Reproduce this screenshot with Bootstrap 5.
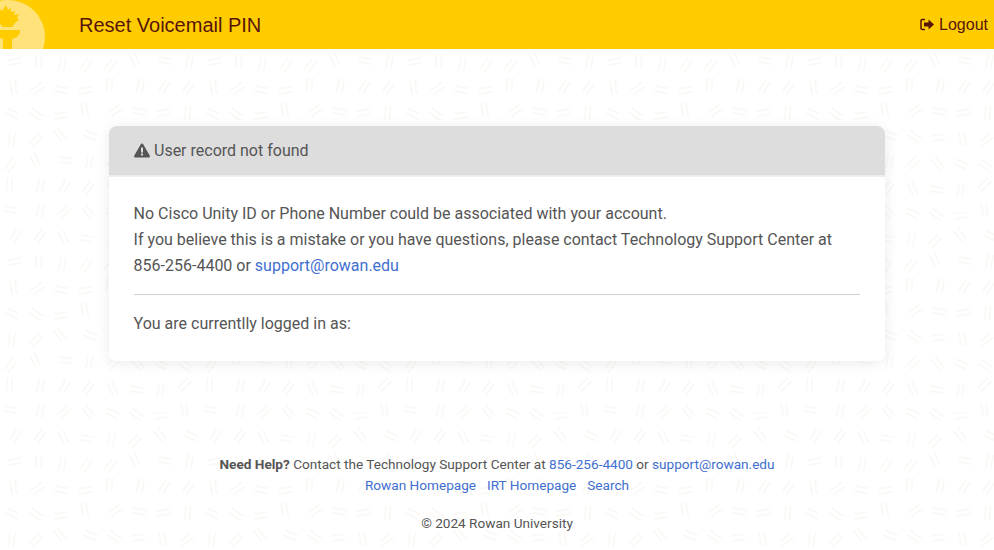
<!DOCTYPE html>
<html lang="en">
<head>
  <meta charset="UTF-8" />
  <title>Reset Voicemail PIN</title>
  <link href="https://cdn.jsdelivr.net/npm/bootstrap@5.3.0/dist/css/bootstrap.min.css" rel="stylesheet">
  <style>
    body {
      font-family: Roboto, "Liberation Sans", sans-serif;
      font-size: 16px;
      color: #555;
      background-color: #fff;
    }
    a { color: #3f6fd0; text-decoration: none; }
    .top-bar { height: 49px; background: #ffcc00; color: #57150b; }
    .top-title { font-family: "Liberation Sans", sans-serif; font-size: 20px; line-height: 1; margin-left: 79px; }
    .top-logo { position: absolute; left: 0; top: 0; }
    .logout-link { font-family: "Liberation Sans", sans-serif; font-size: 16px; color: #57150b; margin-right: 6px; }
    .notice-card { width: 776px; margin: 77px auto 0; border: 0; border-radius: 8px; box-shadow: 0 2px 14px rgba(0,0,0,.08); overflow: hidden; }
    .notice-head { height: 51px; background: #dddddd; border-bottom: 2px solid #eeeeee; padding: 0 25px; color: #555; gap: 4px; }
    .notice-body { padding: 24px 25px 0 24.6px; height: 184px; line-height: 26px; }
    .notice-body hr { margin: 15px 0 16px; border-color: #d0d0d0; opacity: 1; }
    .page-foot { margin-top: 93px; font-size: 13.6px; line-height: 21px; color: #555; text-align: center; }
    .foot-links { gap: 11px; }
    .foot-copy { margin-top: 17px; }
  </style>
</head>
<body>
  <div class="top-bar position-relative d-flex align-items-center justify-content-between">
    <svg class="top-logo" width="46" height="49" viewBox="0 0 46 49">
      <circle cx="8" cy="37" r="37" fill="#ffe27a"/>
      <path d="M6 5l2 5 3-2 0 4 4-1-1 4 5-1-2 4 2 2-4 3-3 4H3L0 24V9l2 2z" fill="#ffcc00"/>
      <path d="M0 30h20v3l-3 4-5 2v10H3V39l-3-1z" fill="#ffcc00"/>
    </svg>
    <div class="top-title">Reset Voicemail PIN</div>
    <a href="#" class="logout-link d-flex align-items-center gap-1">
      <svg width="15" height="13" viewBox="0 0 15 13">
        <path d="M5 1.500H2.200C1.500 1.500 1 2 1 2.700v7.600c0 .7.500 1.200 1.200 1.200H5" fill="none" stroke="#57150b" stroke-width="1.500"/>
        <path d="M4 4.500h4.500V1.500L14 6.500l-5.500 5v-3H4z" fill="#57150b"/>
      </svg>
      Logout
    </a>
  </div>

  <div class="card notice-card">
    <div class="notice-head d-flex align-items-center">
      <svg width="16" height="15" viewBox="0 0 16 15">
        <path d="M8 0.500c.6 0 1 .3 1.200.8l6.500 11.200c.5.900-.1 2-1.100 2H1.400c-1 0-1.600-1.100-1.100-2L6.800 1.300C7 .8 7.400.5 8 .5z" fill="#555"/>
        <rect x="7" y="4.500" width="2" height="5" fill="#dddddd"/>
        <rect x="7" y="10.500" width="2" height="2" fill="#dddddd"/>
      </svg>
      <span>User record not found</span>
    </div>
    <div class="notice-body bg-white">
      <div>No Cisco Unity ID or Phone Number could be associated with your account.<br>
      If you believe this is a mistake or you have questions, please contact Technology Support Center at 856-256-4400 or <a href="#">support@rowan.edu</a></div>
      <hr>
      <div>You are currentlly logged in as:</div>
    </div>
  </div>

  <div class="page-foot">
    <div><strong>Need Help?</strong> Contact the Technology Support Center at <a href="#">856-256-4400</a> or <a href="#">support@rowan.edu</a></div>
    <div class="foot-links d-flex justify-content-center"><a href="#">Rowan Homepage</a> <a href="#">IRT Homepage</a> <a href="#">Search</a></div>
    <div class="foot-copy">© 2024 Rowan University</div>
  </div>
  <script>
    // background tile: double dashes on a jittered grid, one per cell so they never cross
    const angles = [8, 80, -55, 35, -80, 50, -10, 100, -35, 65, 172, -60, 25, 95, -45, 10];
    const cell = 25, cols = 8;
    let dashes = '';
    for (let i = 0; i < cols * cols; i++) {
      const row = Math.floor(i / cols);
      const x = (i % cols) * cell + cell / 2 + ((i * 13) % 7) - 3;
      const y = row * cell + cell / 2 + ((i * 29) % 7) - 3;
      const a = angles[(i * 7 + row * 3) % angles.length];
      dashes += `<path transform="translate(${x} ${y}) rotate(${a})" d="M-7 -2.500H7M-7 2.500H7"/>`;
    }
    const size = cell * cols;
    const tile = `<svg xmlns="http://www.w3.org/2000/svg" width="${size}" height="${size}"><g stroke="#fbf9f6" stroke-width="2" fill="none">${dashes}</g></svg>`;
    document.body.style.backgroundImage = `url("data:image/svg+xml,${encodeURIComponent(tile)}")`;
  </script>
  <script src="https://cdn.jsdelivr.net/npm/bootstrap@5.3.0/dist/js/bootstrap.bundle.min.js"></script>
</body>
</html>
